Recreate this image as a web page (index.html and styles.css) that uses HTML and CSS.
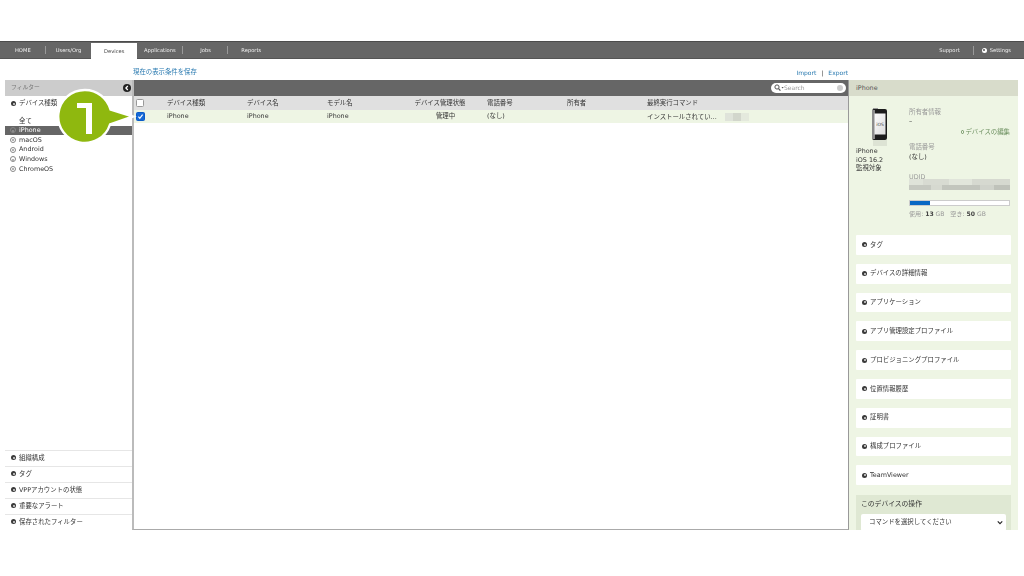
FILE: index.html
```html
<!DOCTYPE html>
<html lang="ja">
<head>
    <meta charset="UTF-8">
    <title>Devices</title>
    <link rel="stylesheet" href="styles.css">
</head>
<body>
    <nav class="nav">
        <a class="nav-item">HOME</a>
        <a class="nav-item nav-before-active">Users/Org</a>
        <a class="nav-item nav-active">Devices</a>
        <a class="nav-item">Applications</a>
        <a class="nav-item">Jobs</a>
        <a class="nav-item nav-last">Reports</a>
        <div class="nav-right">
            <a class="nav-support">Support</a>
            <a class="nav-settings"><span class="dot dot-white"></span>Settings</a>
        </div>
    </nav>

    <div class="toolbar">
        <a class="link save-link">現在の表示条件を保存</a>
        <div class="toolbar-right">
            <a class="link">Import</a>
            <span class="toolbar-sep">|</span>
            <a class="link">Export</a>
        </div>
    </div>

    <div class="layout">
        <aside class="sidebar">
            <div class="sidebar-head">
                <span>フィルター</span>
                <svg class="collapse" viewBox="0 0 8 8"><circle cx="4" cy="4" r="4" fill="#222"/><path d="M4.8 2 2.9 4l1.9 2" fill="none" stroke="#fff" stroke-width="1.3"/></svg>
            </div>
            <div class="filter-title"><span class="dot"></span>デバイス種類</div>
            <ul class="filter-list">
                <li class="filter-all">全て</li>
                <li class="filter-selected"><span class="ring"></span>iPhone</li>
                <li><span class="ring"></span>macOS</li>
                <li><span class="ring"></span>Android</li>
                <li><span class="ring"></span>Windows</li>
                <li><span class="ring"></span>ChromeOS</li>
            </ul>
            <div class="sidebar-foot">
                <div class="foot-row"><span class="dot"></span>組織構成</div>
                <div class="foot-row"><span class="dot"></span>タグ</div>
                <div class="foot-row"><span class="dot"></span>VPPアカウントの状態</div>
                <div class="foot-row"><span class="dot"></span>重要なアラート</div>
                <div class="foot-row"><span class="dot"></span>保存されたフィルター</div>
            </div>
        </aside>

        <main class="main">
            <div class="main-head">
                <div class="search">
                    <svg class="search-icon" viewBox="0 0 10 8"><circle cx="3" cy="3" r="2.1" fill="none" stroke="#555" stroke-width="1"/><path d="M4.6 4.6 6.4 6.6" stroke="#555" stroke-width="1.2"/><path d="M7.5 3h2.2L8.6 4.4z" fill="#555"/></svg>
                    <span class="search-text">Search</span>
                    <span class="search-clear"></span>
                </div>
            </div>
            <table class="devices">
                <thead>
                    <tr>
                        <th class="col-check"><span class="check"></span></th>
                        <th>デバイス種類</th>
                        <th>デバイス名</th>
                        <th>モデル名</th>
                        <th class="center status-head">デバイス管理状態</th>
                        <th>電話番号</th>
                        <th>所有者</th>
                        <th>最終実行コマンド</th>
                    </tr>
                </thead>
                <tbody>
                    <tr>
                        <td class="col-check">
                            <span class="check check-on"><svg viewBox="0 0 8 8"><path d="M1.6 4.2 3.2 6l3.2-4.2" fill="none" stroke="#fff" stroke-width="1.3"/></svg></span>
                        </td>
                        <td>iPhone</td>
                        <td>iPhone</td>
                        <td>iPhone</td>
                        <td class="center status-cell">管理中</td>
                        <td>(なし)</td>
                        <td></td>
                        <td>インストールされてい...<span class="blur-date"></span></td>
                    </tr>
                </tbody>
            </table>
        </main>

        <aside class="detail">
            <div class="detail-head">iPhone</div>
            <div class="summary">
                <div class="summary-left">
                    <svg class="phone" viewBox="0 0 18 38">
                        <defs>
                            <linearGradient id="shine" x1="0" y1="0" x2="1" y2="1">
                                <stop offset="0" stop-color="#fdfdfd"/>
                                <stop offset="1" stop-color="#dcdcdc"/>
                            </linearGradient>
                        </defs>
                        <rect x="2" y="32" width="14" height="6" fill="#dde3d4"/>
                        <rect x="2" y="0" width="5" height="2" fill="#999"/>
                        <rect x="1" y="1" width="15" height="31" rx="2" fill="#1c1c1c"/>
                        <rect x="1" y="2" width="3" height="29" fill="#8c8c8c"/>
                        <rect x="3.5" y="5.5" width="11" height="21" fill="url(#shine)"/>
                        <text x="9" y="18" class="phone-os">iOS</text>
                    </svg>
                    <div class="summary-name">iPhone<br>iOS 16.2<br>監視対象</div>
                </div>
                <div class="summary-right">
                    <div class="field-label">所有者情報</div>
                    <div class="field-value">–</div>
                    <a class="edit-link"><span class="edit-ring"></span>デバイスの編集</a>
                    <div class="field-label phone-label">電話番号</div>
                    <div class="field-value">(なし)</div>
                    <div class="field-label udid-label">UDID</div>
                    <div class="blur-udid"></div>
                    <div class="storage"><div class="storage-used" style="width: 20%"></div></div>
                    <div class="storage-text">使用: <b>13</b> GB &nbsp; 空き: <b>50</b> GB</div>
                </div>
            </div>
            <div class="panels">
                <div class="panel"><span class="dot"></span>タグ</div>
                <div class="panel"><span class="dot"></span>デバイスの詳細情報</div>
                <div class="panel"><span class="dot"></span>アプリケーション</div>
                <div class="panel"><span class="dot"></span>アプリ管理設定プロファイル</div>
                <div class="panel"><span class="dot"></span>プロビジョニングプロファイル</div>
                <div class="panel"><span class="dot"></span>位置情報履歴</div>
                <div class="panel"><span class="dot"></span>証明書</div>
                <div class="panel"><span class="dot"></span>構成プロファイル</div>
                <div class="panel"><span class="dot"></span>TeamViewer</div>
            </div>
            <div class="actions">
                <div class="actions-title">このデバイスの操作</div>
                <div class="select">
                    <span>コマンドを選択してください</span>
                    <svg viewBox="0 0 8 6"><path d="M1 1.5 4 4.5 7 1.5" fill="none" stroke="#222" stroke-width="1.5"/></svg>
                </div>
            </div>
        </aside>
    </div>

    <svg class="callout" viewBox="0 0 80 60">
        <path d="M28 2a26.5 26.5 0 0 1 25.5 19.5L76 28.500 53 36.500A26.500 26.500 0 1 1 28 2z" fill="#8fb80f" stroke="#fff" stroke-width="2.4"/>
        <path d="M20 15h15v31h-6V20h-9z" fill="#fff"/>
    </svg>
</body>
</html>
```

FILE: styles.css
```css
* {
    box-sizing: border-box;
}

html, body {
    margin: 0;
    height: 576px;
    overflow: hidden;
}

body {
    position: relative;
    padding-top: 41px;
    background: #fff;
    color: #333;
    font-family: "DejaVu Sans", "Noto Sans CJK JP", sans-serif;
    font-size: 6.4px;
    line-height: 1;
    filter: blur(0.3px);
}

/* top nav */
.nav {
    display: flex;
    align-items: stretch;
    height: 18px;
    background: #666;
    border-top: 1px solid #4c4c4c;
    border-bottom: 1px solid #555;
    color: #f2f2f2;
    font-size: 5.2px;
}

.nav-item {
    position: relative;
    display: flex;
    align-items: center;
    justify-content: center;
    width: 45.7px;
    padding-top: 1px;
}

.nav-item::after {
    content: "";
    position: absolute;
    right: 0;
    top: 4px;
    bottom: 4px;
    width: 1px;
    background: #999;
}

.nav-before-active::after,
.nav-active::after,
.nav-last::after {
    display: none;
}

.nav-active {
    margin-top: 1px;
    margin-bottom: -1px;
    padding-top: 2px;
    background: #fff;
    color: #444;
}

.nav-right {
    display: flex;
    align-items: center;
    margin-left: auto;
    padding-top: 1px;
    padding-right: 13px;
}

.nav-support {
    padding-right: 13px;
    border-right: 1px solid #999;
    line-height: 9px;
}

.nav-settings {
    display: flex;
    align-items: center;
    padding-left: 8px;
}

/* links row */
.toolbar {
    display: flex;
    align-items: center;
    justify-content: space-between;
    height: 21px;
    padding: 6px 176px 0 133px;
    font-size: 6px;
}

.link {
    color: #2a7ab0;
}

.save-link {
    font-size: 6.4px;
}

.toolbar-right {
    display: flex;
    gap: 5px;
}

.toolbar-sep {
    color: #333;
}

.layout {
    display: flex;
    height: 450px;
    padding-left: 5px;
}

/* filter sidebar */
.sidebar {
    display: flex;
    flex-direction: column;
    width: 127px;
    flex: none;
}

.sidebar-head {
    display: flex;
    align-items: center;
    justify-content: space-between;
    height: 16px;
    padding: 0 1px 0 6px;
    background: #ccc;
    color: #777;
    font-size: 5.8px;
}

.collapse {
    width: 8px;
    height: 8px;
}

.filter-title {
    display: flex;
    align-items: center;
    height: 15px;
    padding-left: 6px;
}

.dot {
    position: relative;
    flex: none;
    width: 5px;
    height: 5px;
    margin-right: 3px;
    border-radius: 50%;
    background: #3a3a3a;
}

.dot::after {
    content: "";
    position: absolute;
    left: 1.5px;
    top: 1.5px;
    width: 2px;
    height: 2px;
    border-radius: 50%;
    background: #ddd;
}

.dot-white {
    background: #fff;
}

.dot-white::after {
    background: #555;
}

.filter-list {
    flex: 1;
    margin: 0;
    padding: 5px 0 0;
    list-style: none;
}

.filter-list li {
    display: flex;
    align-items: center;
    height: 9.6px;
    padding-left: 5px;
}

.filter-list .filter-all {
    padding-left: 14px;
}

.filter-list .filter-selected {
    background: #666;
    color: #fff;
}

.ring {
    position: relative;
    flex: none;
    width: 6px;
    height: 6px;
    margin-right: 3px;
    border: 0.6px solid #888;
    border-radius: 50%;
}

.ring::after {
    content: "";
    position: absolute;
    left: 1.4px;
    top: 1.4px;
    width: 2px;
    height: 2px;
    border-radius: 50%;
    background: #999;
}

.foot-row {
    display: flex;
    align-items: center;
    height: 16px;
    padding-bottom: 1.5px;
    padding-left: 6px;
    border-top: 1.5px solid #e6e6e6;
}

/* device table */
.main {
    display: flex;
    flex-direction: column;
    width: 717px;
    flex: none;
    border-left: 2px solid #bbb;
    border-right: 1px solid #999;
    border-bottom: 1px solid #aaa;
}

.main-head {
    display: flex;
    align-items: center;
    justify-content: flex-end;
    height: 16px;
    padding-right: 2px;
    background: #666;
}

.search {
    display: flex;
    align-items: center;
    width: 75px;
    height: 10px;
    padding: 0 3px;
    border-radius: 5px;
    background: #fff;
    color: #999;
    font-size: 6px;
}

.search-icon {
    width: 10px;
    height: 8px;
}

.search-text {
    flex: 1;
}

.search-clear {
    width: 6px;
    height: 6px;
    border-radius: 50%;
    background: #ccc;
}

.devices {
    width: 100%;
    border-collapse: collapse;
    table-layout: fixed;
}

.devices th,
.devices td {
    padding: 0;
    font-weight: normal;
    text-align: left;
    white-space: nowrap;
}

.devices th {
    height: 14px;
    background: #e0e0e0;
}

.devices td {
    height: 13px;
    background: #eef5e4;
}

.devices .center {
    text-align: center;
}

.devices .status-head {
    padding-right: 14px;
}

.devices .status-cell {
    padding-right: 3px;
}

.devices th:nth-child(n+2) {
    width: 80px;
}

.devices .col-check {
    width: 33px;
    padding-left: 2px;
}

.devices th:last-child {
    width: auto;
}

.check {
    display: block;
    width: 8px;
    height: 8px;
    border: 1px solid #999;
    border-radius: 1.5px;
    background: #fff;
}

.check-on {
    width: 9px;
    height: 9px;
    padding: 0;
    border: 1px solid #0a5cc8;
    background: #1669d6;
}

.check-on svg {
    display: block;
}

.blur-date {
    display: inline-block;
    width: 24px;
    height: 8px;
    margin-left: 8px;
    vertical-align: middle;
    background: linear-gradient(90deg, #dfe3da 0 35%, #d2d6cc 35% 65%, #e4e9dd 65%);
}

/* right detail panel */
.detail {
    display: flex;
    flex-direction: column;
    width: 169px;
    flex: none;
    overflow: hidden;
    background: #eef5e4;
}

.detail-head {
    display: flex;
    align-items: center;
    flex: none;
    height: 16px;
    padding-left: 7px;
    background: #d8dccb;
    color: #555;
}

.summary {
    display: flex;
    flex: none;
    height: 139px;
    padding: 12px 8px 0 7px;
}

.summary-left {
    width: 53px;
    flex: none;
}

.phone {
    display: block;
    width: 18px;
    height: 38px;
    margin-left: 15px;
}

.phone-os {
    fill: #444;
    font-size: 4.500px;
    text-anchor: middle;
}

.summary-name {
    margin-top: 1px;
    line-height: 8.6px;
}

.summary-right {
    flex: 1;
    padding-top: 1px;
}

.field-label {
    color: #999;
}

.field-value {
    margin-top: 3px;
}

.edit-link {
    display: flex;
    align-items: center;
    justify-content: flex-end;
    margin-top: 4px;
    color: #6d9060;
}

.edit-ring {
    width: 3.500px;
    height: 3.500px;
    margin-right: 1px;
    border: 1px solid #6d9060;
    border-radius: 50%;
}

.phone-label {
    margin-top: 9px;
}

.udid-label {
    margin-top: 14px;
}

.blur-udid {
    height: 11px;
    margin-top: -1.400px;
    background:
        linear-gradient(90deg, #c6c9c1 0 22%, #d6d9d0 22% 33%, #c2c5bd 33% 70%, #d0d3cb 70% 84%, #bfc2ba 84%) bottom / 100% 5px no-repeat,
        linear-gradient(90deg, #dfe3d9 0 14%, #d8dbd2 14% 40%, #e1e5db 40% 62%, #d6d9d0 62%) top / 100% 6px no-repeat;
}

.storage {
    height: 6px;
    margin-top: 10px;
    border: 1px solid #ccc;
    background: #fff;
}

.storage-used {
    height: 100%;
    background: #0a68c4;
}

.storage-text {
    margin-top: 5px;
    color: #999;
    font-size: 6.1px;
}

.storage-text b {
    color: #444;
}

.panels {
    display: flex;
    flex-direction: column;
    flex: none;
    gap: 9px;
    padding: 0 7px;
}

.panel {
    display: flex;
    align-items: center;
    height: 19.800px;
    padding-left: 6px;
    border-radius: 1px;
    background: #fff;
}

.actions {
    flex: none;
    height: 40px;
    margin: 10px 7px 0;
    padding: 6px 5px 0;
    background: #dfe8d3;
}

.actions-title {
    font-size: 6.800px;
}

.select {
    display: flex;
    align-items: center;
    justify-content: space-between;
    height: 17px;
    margin-top: 6px;
    padding: 0 3px 0 8px;
    border-radius: 2px;
    background: #fff;
}

.select svg {
    width: 6px;
    height: 5px;
}

/* step marker, lies over the page */
.callout {
    position: absolute;
    left: 57px;
    top: 88px;
    width: 80px;
    height: 60px;
}
```
